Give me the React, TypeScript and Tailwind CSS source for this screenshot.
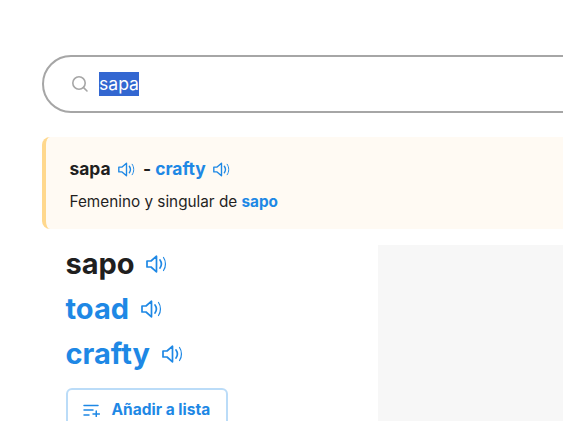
import React from "react";

function Speaker({ big = false, className = "" }: { big?: boolean; className?: string }) {
  return (
    <svg width={big ? 21 : 17} height={big ? 18 : 15} viewBox="0 0 21 18" fill="none" stroke="currentColor" strokeWidth="1.7" strokeLinecap="round" strokeLinejoin="round" className={className}>
      <path d="M1 6h4L10.5 1.2v15.6L5 12H1z" />
      <path d="M14 5c1.7 2.4 1.7 5.6 0 8" />
      <path d="M17.5 2.5c2.6 3.6 2.6 9.4 0 13" strokeWidth="1.2" />
    </svg>
  );
}

export default function App() {
  return (
    <div className="w-[563px] h-[421px] overflow-hidden bg-white text-[#1f1f1f] font-['Inter',sans-serif]">
      <div className="w-[700px] ml-[42px] pt-[55px]">
        <div className="h-[58px] rounded-[29px] border-2 border-[#a6a6a6] flex items-center pl-[27px]">
          <svg width="18" height="18" viewBox="0 0 18 18" fill="none" stroke="#a6a6a6" strokeWidth="1.6" strokeLinecap="round">
            <circle cx="8" cy="8" r="6.2" />
            <path d="M12.6 12.6 16 16" />
          </svg>
          <span className="ml-[10px] bg-[#3367d1] text-white text-[17.6px] leading-[24px]">sapa</span>
        </div>

        <div className="mt-[24px] h-[92px] bg-[#fffaf3] border-l-4 border-[#ffd88d] rounded-lg pl-[24px] pt-[21px]">
          <div className="flex items-center text-[17.4px] font-bold leading-[22px] -ml-[0.5px]">
            <span>sapa</span>
            <Speaker className="ml-[7px] text-[#1e88e5]" />
            <span className="ml-[8.5px]">-</span>
            <span className="ml-[4px] text-[#1e88e5]">crafty</span>
            <Speaker className="ml-[7.5px] text-[#1e88e5]" />
          </div>
          <p className="mt-[12px] text-[15.3px] leading-[20px] -ml-[0.5px]">
            Femenino y singular de <span className="font-bold text-[#1e88e5]">sapo</span>
          </p>
        </div>

        <div className="flex mt-[16px]">
          <div className="w-[336px] pl-[23.5px]">
            <div className="flex items-center h-[38px] text-[29px] font-bold">
              <span>sapo</span>
              <Speaker big className="ml-[11.5px] text-[#1e88e5]" />
            </div>
            <div className="flex items-center h-[38px] mt-[7px] text-[29px] font-bold text-[#1e88e5]">
              <span>toad</span>
              <Speaker big className="ml-[11.5px]" />
            </div>
            <div className="flex items-center h-[38px] mt-[7px] text-[29px] font-bold text-[#1e88e5]">
              <span>crafty</span>
              <Speaker big className="ml-[12px]" />
            </div>
            <button className="mt-[15px] w-[162px] h-[44px] rounded-md border-2 border-[#bbdcf8] flex items-center pl-[15.5px] gap-[11.5px] text-[#1e88e5] text-[15.5px] font-bold">
              <svg width="17" height="13" viewBox="0 0 17 13" fill="none" stroke="currentColor" strokeWidth="1.5" strokeLinecap="round">
                <path d="M1 1.5h14M1 6h9M1 11h5M10 10h6.5M13.25 7v5.5" />
              </svg>
              Añadir a lista
            </button>
          </div>
          <div className="flex-1 h-[300px] bg-[#f7f7f7]" />
        </div>
      </div>
    </div>
  );
}
